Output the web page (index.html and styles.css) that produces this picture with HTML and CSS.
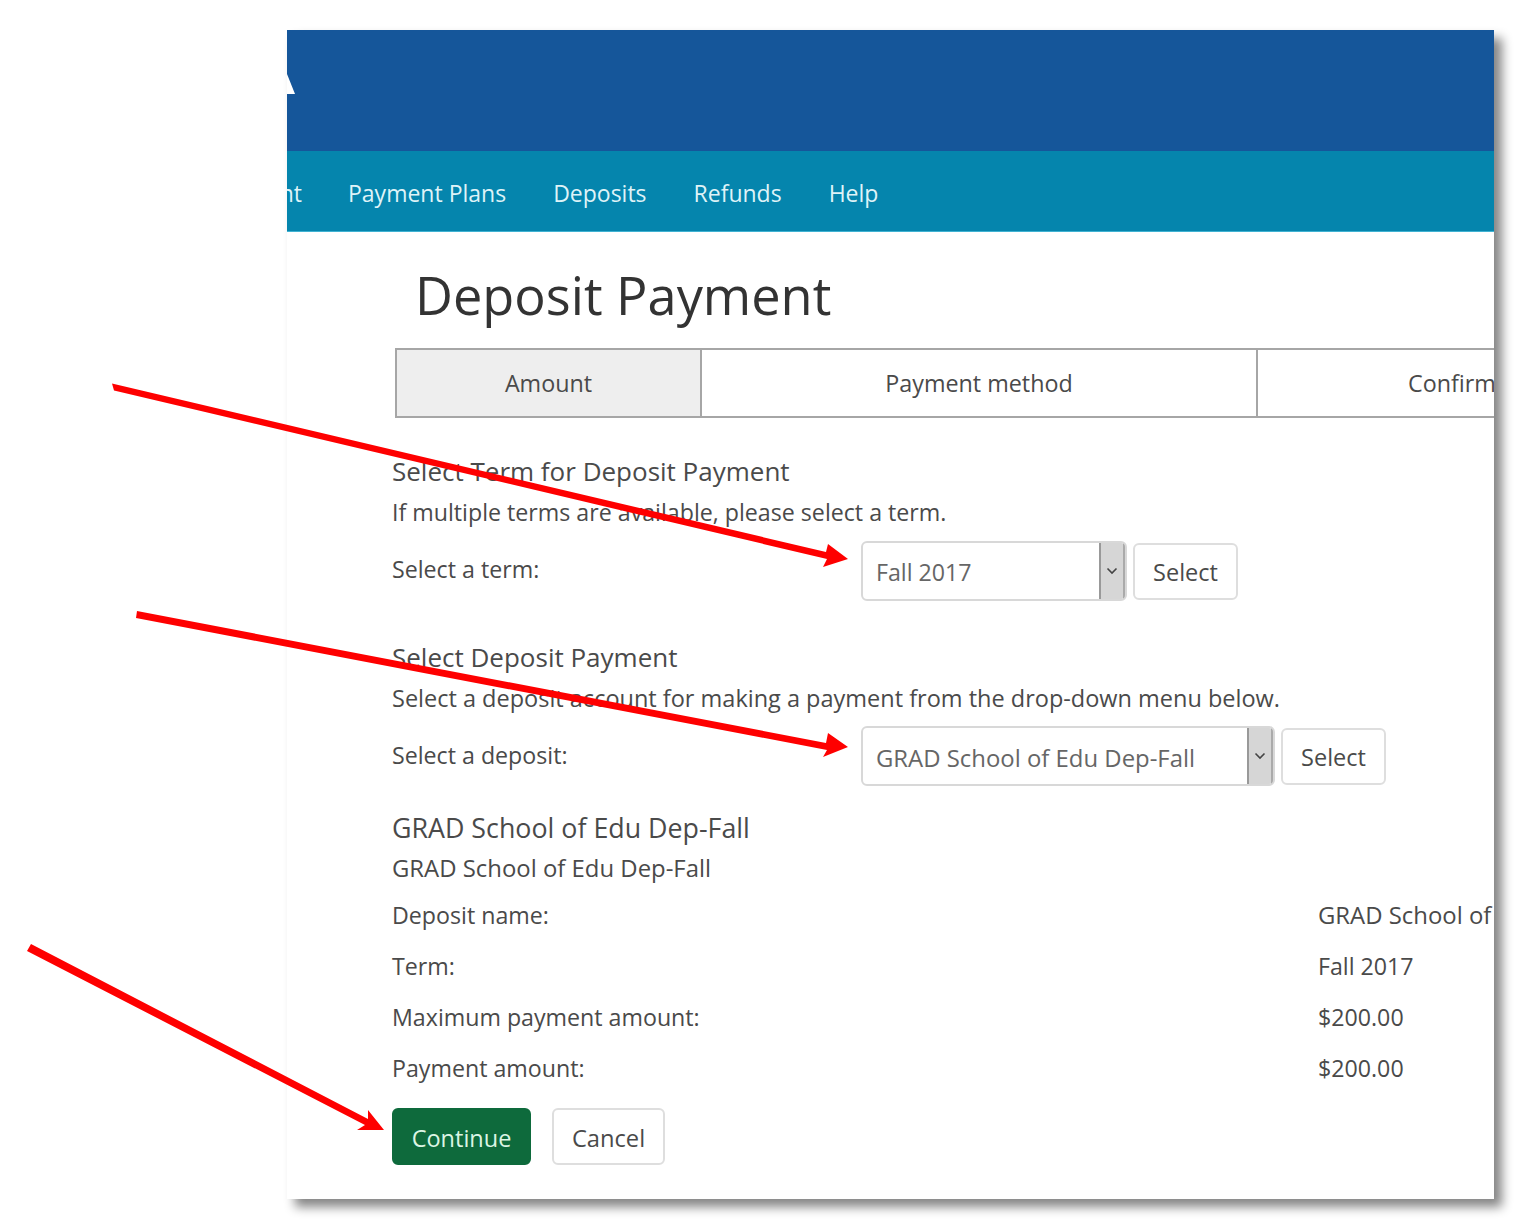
FILE: index.html
```html
<!DOCTYPE html>
<html lang="en">
<head>
<meta charset="utf-8">
<title>Deposit Payment</title>
<link rel="stylesheet" href="styles.css">
</head>
<body>
<div class="window">
  <header class="brand">
    <svg class="logo" width="8" height="24" viewBox="0 0 8 24"><polygon points="0,2 8,22 0,22" fill="#fff"/></svg>
  </header>
  <nav class="nav">
    <div class="nav-first"><a class="nav-item">Payment</a></div>
    <a class="nav-item">Payment Plans</a>
    <a class="nav-item">Deposits</a>
    <a class="nav-item">Refunds</a>
    <a class="nav-item">Help</a>
  </nav>
  <main class="content">
    <h1 class="title">Deposit Payment</h1>
    <div class="steps">
      <div class="step step-a active">Amount</div>
      <div class="step step-b">Payment method</div>
      <div class="step step-c">Confirm</div>
    </div>

    <section class="block block-term">
      <h2 class="heading">Select Term for Deposit Payment</h2>
      <p class="text">If multiple terms are available, please select a term.</p>
      <div class="pick">
        <span class="pick-label">Select a term:</span>
        <div class="select select-term"><span class="select-value">Fall 2017</span><span class="caret"><svg width="14" height="10" viewBox="0 0 14 10"><path d="M2.5 2.5l4.5 4.5 4.5-4.5" fill="none" stroke="#444" stroke-width="1.6"/></svg></span></div>
        <button class="btn">Select</button>
      </div>
    </section>

    <section class="block block-deposit">
      <h2 class="heading">Select Deposit Payment</h2>
      <p class="text text-wide">Select a deposit account for making a payment from the drop-down menu below.</p>
      <div class="pick">
        <span class="pick-label">Select a deposit:</span>
        <div class="select select-deposit"><span class="select-value grad">GRAD School of Edu Dep-Fall</span><span class="caret"><svg width="14" height="10" viewBox="0 0 14 10"><path d="M2.5 2.5l4.5 4.5 4.5-4.5" fill="none" stroke="#444" stroke-width="1.6"/></svg></span></div>
        <button class="btn">Select</button>
      </div>
    </section>

    <section class="block block-detail">
      <h2 class="heading heading-grad">GRAD School of Edu Dep-Fall</h2>
      <p class="text text-tight grad">GRAD School of Edu Dep-Fall</p>
      <dl class="details">
        <dt>Deposit name:</dt><dd class="grad">GRAD School of Edu Dep-Fall</dd>
        <dt>Term:</dt><dd>Fall 2017</dd>
        <dt>Maximum payment amount:</dt><dd>$200.00</dd>
        <dt>Payment amount:</dt><dd>$200.00</dd>
      </dl>
    </section>

    <div class="actions">
      <button class="btn btn-primary">Continue</button>
      <button class="btn btn-cancel">Cancel</button>
    </div>
  </main>
</div>
<svg class="arrows" width="1536" height="1232" viewBox="0 0 1536 1232" aria-hidden="true">
  <g fill="#fe0000" stroke="none">
    <polygon points="112,383.5 114,390.5 827,559 823,567 848,559 828,544 826,552"/>
    <polygon points="137,611 136,618 827,750 823,757 848,747 828,733 826,743"/>
    <polygon points="31,944 27,951 365,1125 357,1130 384,1130 368,1110 368,1119"/>
  </g>
</svg>
</body>
</html>
```
FILE: styles.css
```css
* { box-sizing: border-box; }
html, body { margin: 0; padding: 0; }
body {
  width: 1536px;
  height: 1232px;
  background: #fff;
  font-family: "Open Sans", "Noto Sans", sans-serif;
  color: #4a4a4a;
  padding: 30px 42px 0 287px;
  overflow: hidden;
}
.window {
  width: 1207px;
  height: 1169px;
  background: #fff;
  overflow: hidden;
  box-shadow: 8px 8px 10px rgba(0,0,0,.48);
}
.brand {
  height: 121px;
  background: #15569a;
  padding-top: 42px;
}
.logo { display: block; }
.nav {
  height: 81px;
  background: #0585ad;
  border-bottom: 1px solid #3fb2d2;
  display: flex;
  align-items: center;
  gap: 47px;
  padding-top: 4px;
  color: #dff3f8;
  font-size: 23px;
}
.nav-item { white-space: nowrap; }
.nav-first {
  flex: none;
  width: 15px;
  margin-right: -1px;
  display: flex;
  justify-content: flex-end;
}
.content { padding-left: 105px; }
.title {
  margin: 30px 0 0 23px;
  font-size: 52.3px;
  line-height: 66px;
  font-weight: 400;
  color: #333;
}
.steps {
  display: flex;
  margin: 20px 0 0 3px;
  height: 70px;
  width: 1300px;
  border: 2px solid #a6a6a6;
  font-size: 23.3px;
}
.step {
  flex: none;
  display: flex;
  align-items: center;
  justify-content: center;
  border-right: 2px solid #a6a6a6;
}
.step-a { width: 305px; }
.step-b { width: 556px; }
.step-c { width: 388px; border-right: 0; }
.active { background: #eee; }
.block-term { margin-top: 35px; }
.block-deposit { margin-top: 38px; }
.block-detail { margin-top: 24px; }
.heading {
  margin: 0;
  font-size: 26px;
  line-height: 36px;
  font-weight: 400;
}
.heading-grad { font-size: 26.8px; }
.text {
  margin: 5px 0 0;
  font-size: 23.2px;
  line-height: 36px;
}
.text-wide { font-size: 23.5px; }
.text-tight { margin-top: 4px; }
.pick {
  display: flex;
  align-items: center;
  margin-top: 11px;
  font-size: 23.2px;
}
.block-deposit .pick { margin-top: 10px; }
.pick-label { flex: none; width: 469px; padding-bottom: 4px; }
.block-deposit .pick-label { padding-bottom: 2px; }
.select {
  display: flex;
  height: 60px;
  border: 2px solid #d8d8d8;
  border-radius: 6px;
  overflow: hidden;
  background: #fff;
}
.select-term { width: 266px; }
.select-deposit { width: 414px; }
.select-value {
  flex: 1;
  padding: 2px 0 0 13px;
  display: flex;
  align-items: center;
  color: #666;
  white-space: nowrap;
}
.grad { font-size: 23.9px; }
.caret {
  flex: none;
  width: 26px;
  background: #d6d6d6;
  border-left: 2px solid #999;
  border-right: 2px solid #aaa;
  display: flex;
  align-items: center;
  justify-content: center;
}
.btn {
  font-family: inherit;
  font-size: 23.5px;
  color: #4a4a4a;
  background: #fff;
  border: 2px solid #dedede;
  border-radius: 6px;
  height: 57px;
  width: 105px;
  margin-left: 6px;
  padding: 2px 0 0;
}
.details {
  display: grid;
  grid-template-columns: 926px 1fr;
  grid-auto-rows: 51px;
  align-items: center;
  margin: 3px 0 0;
  font-size: 23.2px;
}
.details dt { margin: 0; }
.details dd { margin: 0; white-space: nowrap; }
.details dd.grad { font-size: 23.9px; }
.actions { display: flex; gap: 21px; margin-top: 15px; }
.btn-primary {
  margin: 0;
  width: 139px;
  background: #0e6a3c;
  border-color: #0e6a3c;
  color: #dcf5e4;
}
.btn-cancel { margin: 0; width: 113px; font-size: 23.7px; }
.arrows { position: absolute; left: 0; top: 0; pointer-events: none; }
```
